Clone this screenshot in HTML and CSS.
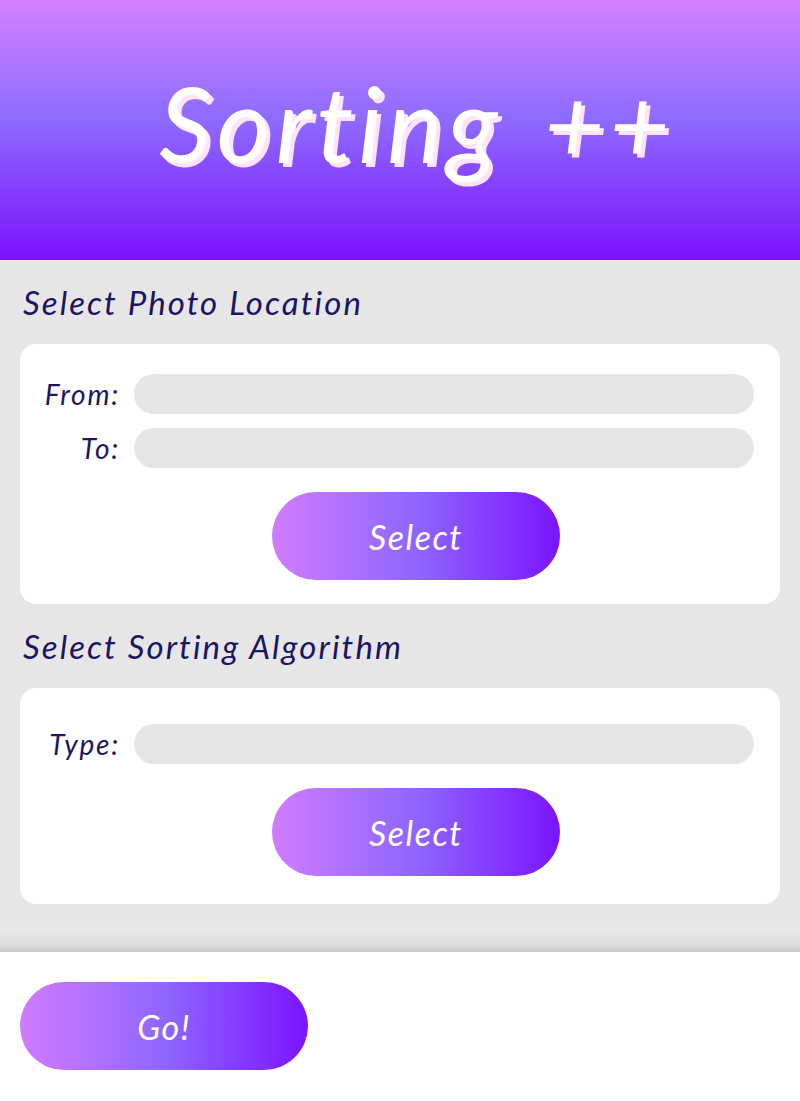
FILE: index.html
```html
<!DOCTYPE html>
<html lang="en">
<head>
<meta charset="utf-8">
<title>Sorting ++</title>
<link rel="stylesheet" href="styles.css">
</head>
<body>
<header class="hero">
  <h1 class="hero-title">Sorting ++</h1>
</header>
<main class="content">
  <h2 class="section-title">Select Photo Location</h2>
  <section class="card card-location">
    <div class="field-grid">
      <label class="field-label">From:</label>
      <div class="field-input"></div>
      <label class="field-label">To:</label>
      <div class="field-input"></div>
    </div>
    <div class="button-row">
      <button class="pill-btn">Select</button>
    </div>
  </section>
  <h2 class="section-title">Select Sorting Algorithm</h2>
  <section class="card card-algo">
    <div class="field-grid">
      <label class="field-label">Type:</label>
      <div class="field-input"></div>
    </div>
    <div class="button-row">
      <button class="pill-btn">Select</button>
    </div>
  </section>
  <div class="shelf"></div>
</main>
<footer class="footer">
  <button class="pill-btn">Go!</button>
</footer>
</body>
</html>
```

FILE: styles.css
```css
* { box-sizing: border-box; }
html, body {
  margin: 0;
  padding: 0;
  background: #ffffff;
  font-family: "Lato", "Open Sans", sans-serif;
  font-style: italic;
  font-variant-ligatures: none;
}
.hero {
  height: 260px;
  background: linear-gradient(to bottom, #d480ff 0%, #8e6cff 45%, #7c12fd 100%);
  display: flex;
  align-items: center;
  justify-content: center;
  padding-bottom: 14px;
}
.hero-title {
  margin: 0;
  padding-left: 34px;
  color: #ffffff;
  font-size: 104px;
  font-weight: 400;
  font-style: italic;
  letter-spacing: 5px;
  word-spacing: 12px;
  line-height: 1;
  font-variant-ligatures: none;
  text-shadow: 4px 4px 0 #ffe2fb;
}
.content {
  background: #e6e6e6;
  padding: 0 20px;
  display: flex;
  flex-direction: column;
}
.section-title {
  margin: 22px 0 22px 3px;
  height: 40px;
  line-height: 40px;
  font-size: 33px;
  font-weight: 400;
  font-style: italic;
  letter-spacing: 2.1px;
  color: #1c1563;
}
.card {
  background: #ffffff;
  border-radius: 16px;
  padding: 30px 26px 24px 20px;
  display: flex;
  flex-direction: column;
  gap: 24px;
}
.card-algo {
  padding-top: 36px;
  padding-bottom: 28px;
}
.field-grid {
  display: grid;
  grid-template-columns: 80px 1fr;
  column-gap: 14px;
  row-gap: 14px;
  align-items: center;
}
.field-label {
  text-align: right;
  font-size: 28px;
  letter-spacing: 1.8px;
  color: #1c1563;
  line-height: 40px;
  white-space: nowrap;
}
.field-input {
  height: 40px;
  border-radius: 20px;
  background: #e6e6e6;
}
.button-row {
  display: flex;
  justify-content: center;
  padding-left: 38px;
}
.pill-btn {
  width: 288px;
  height: 88px;
  border: none;
  border-radius: 44px;
  background: linear-gradient(to right, #d07cff 0%, #8f66ff 50%, #7b14ff 100%);
  color: #ffffff;
  font-family: "Lato", "Open Sans", sans-serif;
  font-style: italic;
  font-size: 34px;
  letter-spacing: 1.5px;
  padding: 0;
  cursor: pointer;
}
.shelf {
  height: 48px;
  margin: 0 -20px;
  background: linear-gradient(to bottom, #e6e6e6 0%, #e6e6e6 30%, #e9e9e9 55%, #dcdcdc 85%, #cacaca 100%);
}
.footer {
  height: 149px;
  background: #ffffff;
  padding: 30px 20px;
}
```
